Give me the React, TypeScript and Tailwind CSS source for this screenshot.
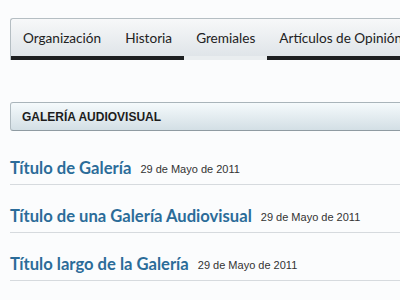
const tabs = [
  { label: 'Organización', active: false },
  { label: 'Historia', active: false },
  { label: 'Gremiales', active: true },
  { label: 'Artículos de Opinión', active: false },
];

const items = [
  { title: 'Título de Galería', date: '29 de Mayo de 2011' },
  { title: 'Título de una Galería Audiovisual', date: '29 de Mayo de 2011' },
  { title: 'Título largo de la Galería', date: '29 de Mayo de 2011' },
];

export default function App() {
  return (
    <div className="h-[300px] w-[400px] overflow-hidden bg-[#fbfcfd] pl-[10px] pt-[18px]">
      <nav className="flex w-[420px] rounded-tl-[3px] border-l border-t border-[#b5bec3] bg-gradient-to-b from-[#f7f8f9] to-[#dde3e7]">
        {tabs.map((tab) => (
          <div
            key={tab.label}
            className={`shrink-0 whitespace-nowrap border-b-[4px] px-[12px] pb-[9px] pt-[10px] text-[13.6px] leading-[18px] text-[#222] ${
              tab.active ? 'border-[#e9edef]' : 'border-[#1d1f21]'
            }`}
            style={{ fontFamily: 'Lato, "Open Sans", sans-serif' }}
          >
            {tab.label}
          </div>
        ))}
      </nav>

      <div className="mt-[42px] flex h-[29px] w-[400px] items-center rounded-l-[3px] border border-b-[#8f9ba2] border-l-[#b0bbc1] border-t-[#a9b4ba] bg-gradient-to-b from-[#f5fafc] to-[#d3dfe5] pl-[11px] font-['Liberation_Sans',Arial,sans-serif] text-[12px] font-bold text-[#1c1c1c]">
        GALERÍA AUDIOVISUAL
      </div>

      <ul className="mt-[6px]">
        {items.map((item) => (
          <li key={item.title} className="flex h-[48px] items-center gap-[9px] border-b border-[#d6dade] pt-[16px]">
            <span
              className="text-[16.6px] font-bold text-[#2b6c99]"
              style={{ fontFamily: 'Lato, "Open Sans", sans-serif' }}
            >
              {item.title}
            </span>
            <span className="pt-[2px] font-['Liberation_Sans',Arial,sans-serif] text-[11px] text-[#333]">{item.date}</span>
          </li>
        ))}
      </ul>
    </div>
  );
}
